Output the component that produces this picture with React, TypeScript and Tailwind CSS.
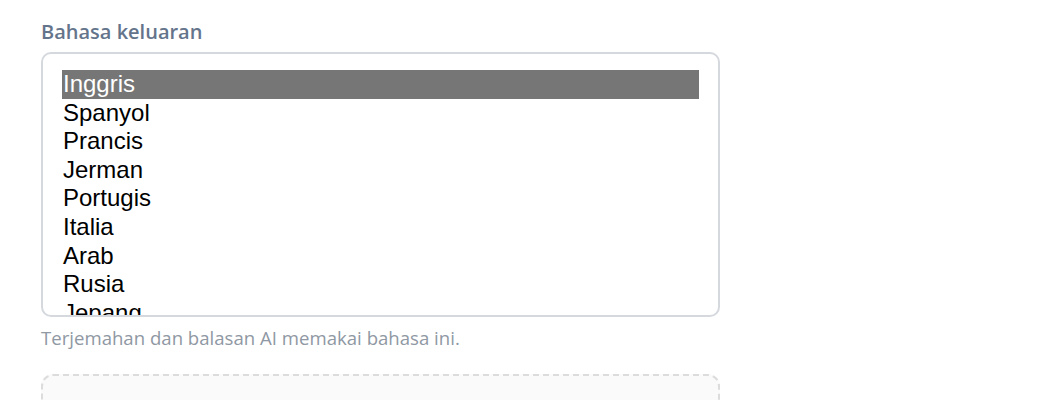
import React from "react";

const options = [
  "Inggris",
  "Spanyol",
  "Prancis",
  "Jerman",
  "Portugis",
  "Italia",
  "Arab",
  "Rusia",
  "Jepang",
];

export default function App() {
  return (
    <div className="h-[400px] w-[1040px] overflow-hidden bg-white pl-[41px] pt-[18px]">
      <div className="w-[679px]">
        <div className="font-['Open_Sans',sans-serif] text-[20px] font-semibold leading-[28px] text-[#64748b]">
          Bahasa keluaran
        </div>
        <div className="mt-[6px] h-[265px] overflow-hidden rounded-[10px] border-2 border-[#d5d9de] bg-white px-[19px] pt-[16px]">
          {options.map((o, i) => (
            <div
              key={o}
              className={
                "h-[28.6px] pl-[1px] font-['Liberation_Sans',Arial,sans-serif] text-[24px] leading-[28px] " +
                (i === 0 ? "bg-[#767676] text-white" : "text-black")
              }
            >
              {o}
            </div>
          ))}
        </div>
        <div className="mt-[8px] font-['Open_Sans',sans-serif] text-[18.6px] leading-[26px] text-[#8f98a3]">
          Terjemahan dan balasan AI memakai bahasa ini.
        </div>
        <div className="mt-[23px] h-[60px] rounded-[12px] border-2 border-dashed border-[#dcdcdc] bg-[#fafafa]" />
      </div>
    </div>
  );
}
